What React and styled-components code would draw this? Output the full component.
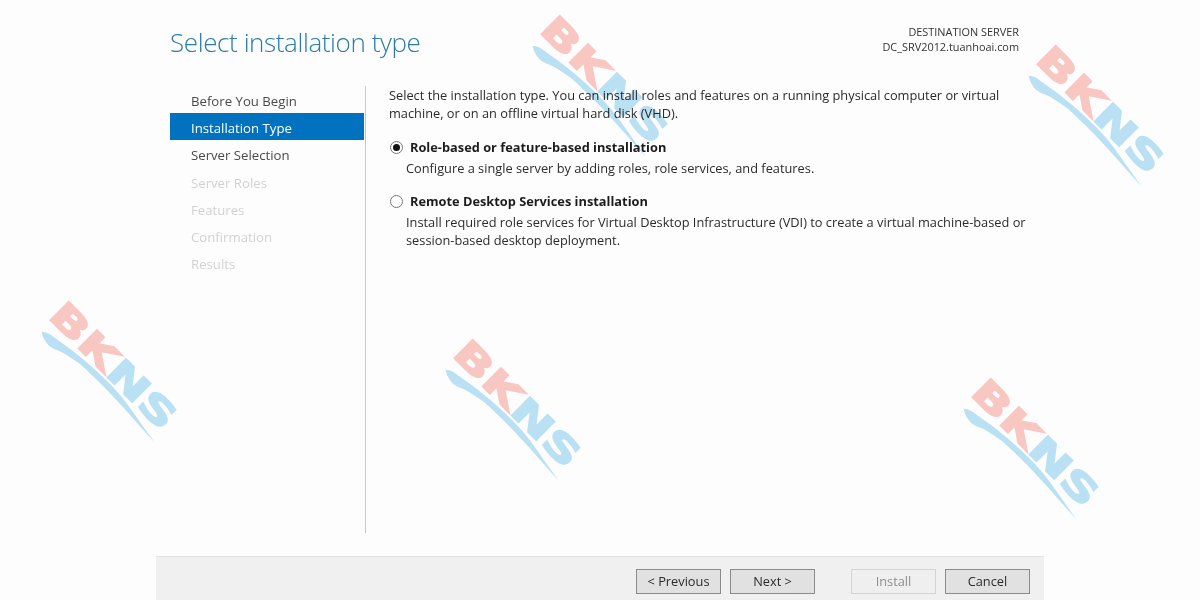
import React from 'react';
import styled, { createGlobalStyle } from 'styled-components';

const GlobalStyle = createGlobalStyle`
  html, body {
    margin: 0;
    padding: 0;
    height: 600px;
    overflow: hidden;
    background: #fdfdfd;
  }
`;

const Page = styled.div`
  position: relative;
  width: 1200px;
  height: 600px;
  overflow: hidden;
  background: #fdfdfd;
  font-family: "Open Sans", "Liberation Sans", sans-serif;
  font-size: 12.8px;
  color: #2b2b2b;
`;

const Wizard = styled.div`
  width: 888px;
  height: 600px;
  margin: 0 auto;
  display: flex;
  flex-direction: column;
`;

const Header = styled.header`
  height: 86px;
  flex: none;
  box-sizing: border-box;
  padding: 24px 25px 0 14px;
  display: flex;
  justify-content: space-between;
  align-items: flex-start;
`;

const Title = styled.h1`
  margin: 0;
  font-size: 26px;
  line-height: 36px;
  letter-spacing: -0.4px;
  font-weight: 300;
  color: #2a7da6;
`;

const Destination = styled.div`
  text-align: right;
  font-size: 10.9px;
  line-height: 15px;
  color: #333;
`;

const Body = styled.div`
  flex: 1;
  display: flex;
  margin: 0 0 23px 14px;
`;

const Steps = styled.nav`
  width: 195px;
  flex: none;
  border-right: 1px solid #c9c9c9;
  box-sizing: content-box;
`;

const Step = styled.div`
  width: 194px;
  height: 27.2px;
  line-height: 27px;
  box-sizing: border-box;
  padding: 2px 0 0 21px;
  font-size: 13.2px;
  color: ${({ $state }) => ({ active: '#fff', done: '#4a4a4a', off: '#d2d2d2' }[$state])};
  background: ${({ $state }) => ($state === 'active' ? '#0072c0' : 'transparent')};
`;

const Content = styled.main`
  flex: 1;
  padding: 0 0 0 23px;
`;

const Intro = styled.p`
  margin: 0 0 14px;
  width: 630px;
  line-height: 18px;
`;

const Option = styled.div`
  margin-bottom: 13px;
`;

const OptionHead = styled.div`
  display: flex;
  align-items: center;
  gap: 7px;
  height: 22px;
  padding-left: 1px;
  font-weight: 700;
  font-size: 12.8px;
  color: #1c1c1c;
`;

const Radio = styled.span`
  width: 13px;
  height: 13px;
  flex: none;
  box-sizing: border-box;
  border: 1px solid #777;
  border-radius: 50%;
  background: #fff;
  display: flex;
  align-items: center;
  justify-content: center;

  &::after {
    content: '';
    display: ${({ $checked }) => ($checked ? 'block' : 'none')};
    width: 7px;
    height: 7px;
    border-radius: 50%;
    background: #111;
  }
`;

const OptionText = styled.p`
  margin: 1px 0 0;
  padding-left: 17px;
  width: 640px;
  line-height: 18px;
`;

const Footer = styled.footer`
  height: 44px;
  flex: none;
  box-sizing: border-box;
  border-top: 1px solid #e2e2e2;
  background: #f0f0f0;
  padding: 12px 13px 0 480px;
  display: flex;
  align-items: flex-start;
`;

const Button = styled.button`
  width: 85px;
  height: 25px;
  padding: 0 0 1px;
  margin-left: ${({ $gap }) => $gap || 0}px;
  box-sizing: border-box;
  border: 1px solid ${({ disabled }) => (disabled ? '#d4d4d4' : '#8a8a8a')};
  background: ${({ disabled }) => (disabled ? '#efefef' : '#e1e1e1')};
  color: ${({ disabled }) => (disabled ? '#8f8f8f' : '#2b2b2b')};
  font-family: inherit;
  font-size: 12.8px;
`;

const MarkLayer = styled.div`
  position: absolute;
  left: ${({ $x }) => $x}px;
  top: ${({ $y }) => $y}px;
  width: 136px;
  height: 142px;
  pointer-events: none;
  mix-blend-mode: multiply;
`;

const MarkLetters = styled.div`
  position: absolute;
  left: 6px;
  top: -15px;
  white-space: nowrap;
  font-family: "DejaVu Sans", sans-serif;
  font-weight: 700;
  font-size: 36px;
  line-height: 36px;
  -webkit-text-stroke: 1.5px currentColor;
  transform-origin: 0 30px;
  transform: rotate(45deg) scaleX(1.46);
`;

const Red = styled.span`
  color: #fbc9c4;
`;

const Blue = styled.span`
  color: #bce2f5;
`;

const Swoosh = styled.svg`
  position: absolute;
  left: 0;
  top: 0;
`;

const Watermark = ({ x, y }) => (
  <MarkLayer $x={x} $y={y}>
    <Swoosh width="136" height="142" viewBox="0 0 136 142">
      <path
        d="M0.7 29.7C5 30 9 32 12.3 34.7C21 41 30 47 39 54.7C48 62 58 71 67 80C75 88 82 96 89 106C97 117 105 129 114 141C105 131 97 122 89 113C81 104 72 94 64 86C56 78 47 69 39 62C33 58 28 54 22.3 51C17 48 11 47 7.3 43C4 39 1 34 0.7 29.7Z"
        fill="#bce2f5"
      />
    </Swoosh>
    <MarkLetters>
      <Red>BK</Red>
      <Blue>NS</Blue>
    </MarkLetters>
  </MarkLayer>
);

const marks = [
  [532, 16],
  [1028, 46],
  [41, 302],
  [445, 340],
  [963, 379],
];

const steps = [
  ['Before You Begin', 'done'],
  ['Installation Type', 'active'],
  ['Server Selection', 'done'],
  ['Server Roles', 'off'],
  ['Features', 'off'],
  ['Confirmation', 'off'],
  ['Results', 'off'],
];

const App = () => (
  <Page>
    <GlobalStyle />
    <Wizard>
      <Header>
        <Title>Select installation type</Title>
        <Destination>
          DESTINATION SERVER
          <br />
          DC_SRV2012.tuanhoai.com
        </Destination>
      </Header>
      <Body>
        <Steps>
          {steps.map(([label, state]) => (
            <Step key={label} $state={state}>{label}</Step>
          ))}
        </Steps>
        <Content>
          <Intro>
            Select the installation type. You can install roles and features on a running physical computer or virtual machine, or on an offline virtual hard disk (VHD).
          </Intro>
          <Option>
            <OptionHead><Radio $checked />Role-based or feature-based installation</OptionHead>
            <OptionText>Configure a single server by adding roles, role services, and features.</OptionText>
          </Option>
          <Option>
            <OptionHead><Radio />Remote Desktop Services installation</OptionHead>
            <OptionText>
              Install required role services for Virtual Desktop Infrastructure (VDI) to create a virtual machine-based or session-based desktop deployment.
            </OptionText>
          </Option>
        </Content>
      </Body>
      <Footer>
        <Button>&lt; Previous</Button>
        <Button $gap={9}>Next &gt;</Button>
        <Button $gap={36} disabled>Install</Button>
        <Button $gap={9}>Cancel</Button>
      </Footer>
    </Wizard>
    {marks.map(([x, y]) => (
      <Watermark key={x} x={x} y={y} />
    ))}
  </Page>
);

export default App;
